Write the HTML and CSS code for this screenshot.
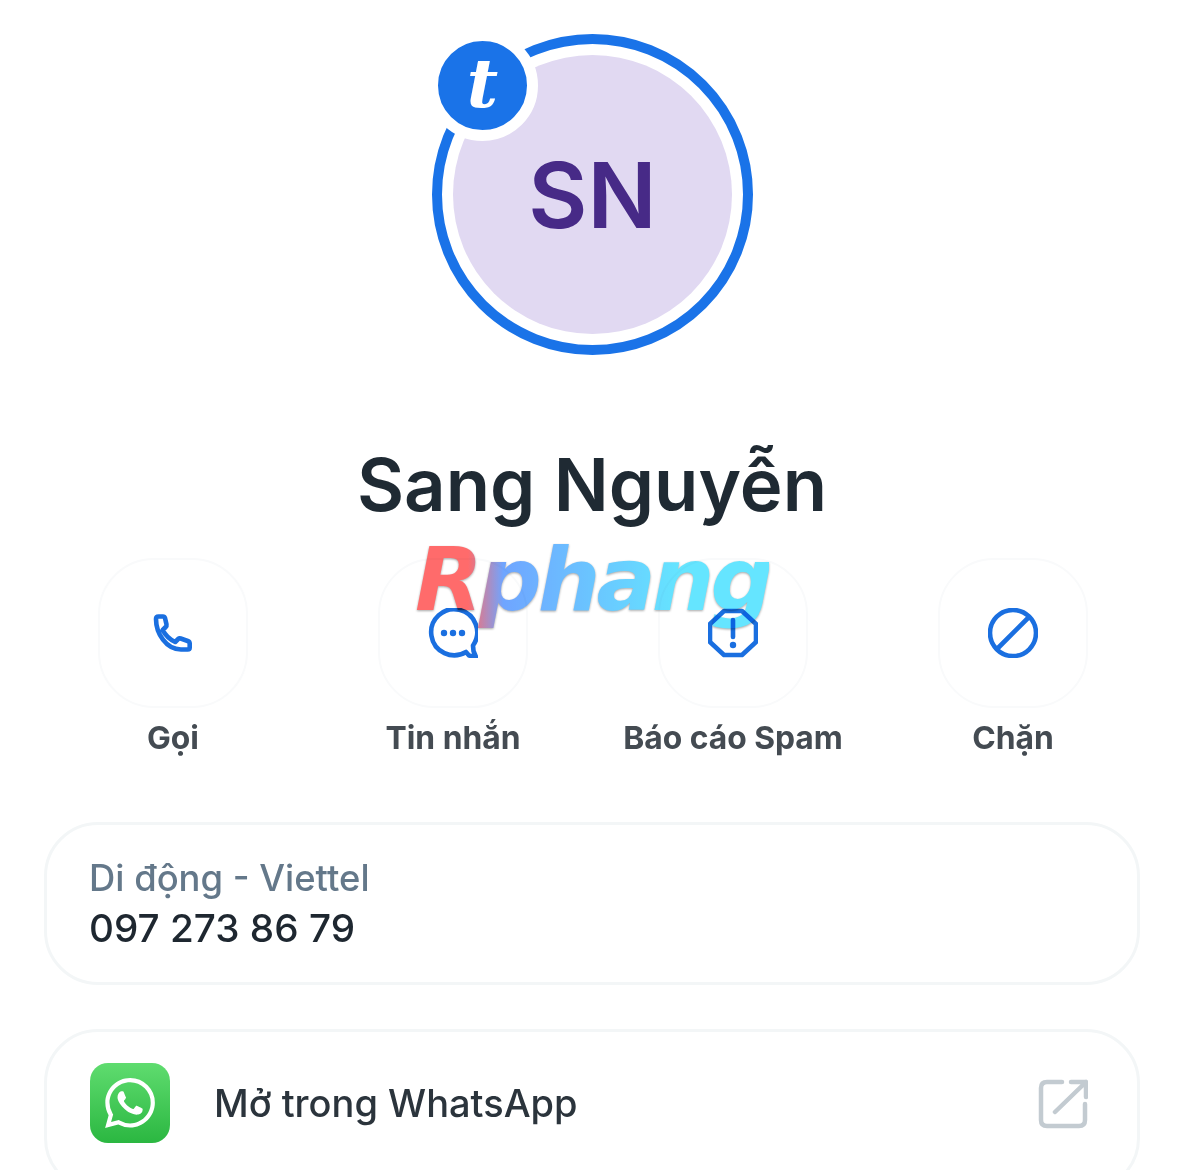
FILE: index.html
```html
<!DOCTYPE html>
<html lang="vi">
<head>
  <meta charset="UTF-8">
  <meta name="viewport" content="width=device-width, initial-scale=1.0">
  <title>Sang Nguyễn</title>
  <link rel="stylesheet" href="styles.css">
</head>
<body>
  <div class="page">
    <div class="avatar">
      <div class="avatar-inner">SN</div>
      <div class="badge">t</div>
    </div>

    <h1 class="name">Sang Nguyễn</h1>

    <div class="actions">
      <div class="action">
        <div class="action-box">
          <svg class="icon" viewBox="0 0 50 50"><path d="M8 11q0-2.500 2.500-2.500h4.500q1.500 0 2 1.500l1.500 6.500q.3 1.500-.8 2.500l-3 3q4 8 12.500 12l3-3q1-1 2.500-.5l7 2.500q2 .8 2 2.500v4q0 2-2 2h-6C18 42 8 25 8 11z"/></svg>
        </div>
        <div class="action-label">Gọi</div>
      </div>
      <div class="action">
        <div class="action-box">
          <svg class="icon" viewBox="0 0 50 50"><path d="M48 49l-7-1.500-3-3.500a23 23 0 1 1 7-6.500l.5 5.500z"/><circle class="dot" cx="16" cy="25" r="3.200"/><circle class="dot" cx="25" cy="25" r="3.200"/><circle class="dot" cx="34" cy="25" r="3.200"/></svg>
        </div>
        <div class="action-label">Tin nhắn</div>
      </div>
      <div class="action">
        <div class="action-box">
          <svg class="icon" viewBox="0 0 50 50"><path d="M16 3h18l14 13v18L34 47H16L2 34V16z"/><path d="M25 12v17"/><circle class="dot" cx="25" cy="37" r="3.200"/></svg>
        </div>
        <div class="action-label">Báo cáo Spam</div>
      </div>
      <div class="action">
        <div class="action-box">
          <svg class="icon" viewBox="0 0 50 50"><circle cx="25" cy="25" r="23"/><path d="M9 41L41 9"/></svg>
        </div>
        <div class="action-label">Chặn</div>
      </div>
    </div>

    <div class="card card-phone">
      <div class="phone-type">Di động - Viettel</div>
      <div class="phone-number">097 273 86 79</div>
    </div>

    <div class="card card-link">
      <div class="wa-icon">
        <svg viewBox="0 0 24 24"><path d="M17.472 14.382c-.297-.149-1.758-.867-2.03-.967-.273-.099-.471-.148-.67.15-.197.297-.767.966-.94 1.164-.173.199-.347.223-.644.075-.297-.15-1.255-.463-2.39-1.475-.883-.788-1.48-1.761-1.653-2.059-.173-.297-.018-.458.13-.606.134-.133.298-.347.446-.52.149-.174.198-.298.298-.497.099-.198.05-.371-.025-.52-.075-.149-.669-1.612-.916-2.207-.242-.579-.487-.5-.669-.51-.173-.008-.371-.01-.57-.01-.198 0-.52.074-.792.372-.272.297-1.04 1.016-1.04 2.479 0 1.462 1.065 2.875 1.213 3.074.149.198 2.096 3.2 5.077 4.487.709.306 1.262.489 1.694.625.712.227 1.36.195 1.871.118.571-.085 1.758-.719 2.006-1.413.248-.694.248-1.289.173-1.413-.074-.124-.272-.198-.57-.347m-5.421 7.403h-.004a9.87 9.87 0 01-5.031-1.378l-.361-.214-3.741.982.998-3.648-.235-.374a9.86 9.86 0 01-1.51-5.26c.001-5.45 4.436-9.884 9.888-9.884 2.64 0 5.122 1.03 6.988 2.898a9.825 9.825 0 012.893 6.994c-.003 5.45-4.437 9.884-9.885 9.884m8.413-18.297A11.815 11.815 0 0012.05 0C5.495 0 .16 5.335.157 11.892c0 2.096.547 4.142 1.588 5.945L.057 24l6.305-1.654a11.882 11.882 0 005.683 1.448h.005c6.554 0 11.89-5.335 11.893-11.893a11.821 11.821 0 00-3.48-8.413z"/></svg>
      </div>
      <div class="link-text">Mở trong WhatsApp</div>
      <svg class="ext-icon" viewBox="0 0 50 50"><path d="M24 3H9q-6 0-6 6v32q0 6 6 6h32q6 0 6-6V25"/><path d="M17 33L48 3M33 3h15v15"/></svg>
    </div>

    <div class="watermark">Rphang</div>
  </div>
</body>
</html>
```

FILE: styles.css
```css
html, body { margin: 0; height: 100%; background: #fff; }
body { font-family: Inter, "Noto Sans", sans-serif; overflow: hidden; }
.page { position: relative; height: 1170px; overflow: hidden; padding-top: 34px; box-sizing: border-box; }

.avatar { position: relative; width: 321px; height: 321px; margin-left: 432px; box-sizing: border-box; border: 10px solid #1a73e8; border-radius: 50%; padding: 11px; }
.avatar-inner { width: 100%; height: 100%; border-radius: 50%; background: #e1d9f2; color: #472a87; font-size: 91px; font-weight: 600; display: flex; align-items: center; justify-content: center; }
.badge { position: absolute; left: -10px; top: -9px; width: 89px; height: 89px; box-sizing: content-box; border: 11px solid #fff; margin: -5px 0 0 -5px; border-radius: 50%; background: #1a73e8; color: #fff; font-family: "DejaVu Serif", serif; font-style: italic; font-weight: 700; font-size: 68px; line-height: 84px; text-align: center; }

.name { margin: 88px 0 0; text-align: center; font-size: 72.500px; line-height: 84px; font-weight: 600; color: #1f2a33; }

.actions { display: grid; grid-template-columns: repeat(4, 280px); margin: 31px 0 0 33px; }
.action { display: flex; flex-direction: column; align-items: center; }
.action-box { width: 150px; height: 150px; box-sizing: border-box; border: 2px solid #f9fafb; border-radius: 56px; display: flex; align-items: center; justify-content: center; }
.icon { width: 50px; height: 50px; fill: none; stroke: #1a6fe0; stroke-width: 4.600; stroke-linejoin: round; stroke-linecap: round; }
.icon .dot { fill: #1a6fe0; stroke: none; }
.action-label { margin-top: 11px; font-size: 31.800px; line-height: 38px; font-weight: 700; color: #444b52; white-space: nowrap; }

.card { margin: 0 44px; box-sizing: border-box; border: 3px solid #f3f6f7; border-radius: 54px; }
.card-phone { height: 163px; margin-top: 65px; padding: 29px 42px 0; }
.phone-type { font-size: 36.400px; line-height: 48px; font-weight: 500; color: #64788a; }
.phone-number { font-size: 38.700px; line-height: 52px; font-weight: 500; color: #1e2730; }

.card-link { height: 163px; margin-top: 44px; padding: 31px 48px 0 43px; display: flex; align-items: flex-start; }
.wa-icon { width: 80px; height: 80px; flex: none; border-radius: 18px; background: linear-gradient(#5fdc6f, #2bb741); display: flex; align-items: center; justify-content: center; }
.wa-icon svg { width: 50px; height: 50px; fill: #fff; }
.link-text { margin-left: 44px; flex: 1; font-size: 38px; line-height: 80px; font-weight: 500; color: #2b343c; }
.ext-icon { width: 50px; height: 50px; margin-top: 16px; margin-right: 1px; fill: none; stroke: #c3cbd1; stroke-width: 4.500; stroke-linecap: round; stroke-linejoin: round; }

/* sits over the action row, icons show through it */
.watermark { position: absolute; left: 415px; top: 527px; font-family: "DejaVu Sans", sans-serif; font-style: italic; font-weight: 700; font-size: 88px; line-height: 106px; letter-spacing: -4px; color: transparent; background: linear-gradient(90deg, #ff6b6b 0, #ff6b6b 15%, #6fa5ff 25%, #65e5ff 75%); -webkit-background-clip: text; background-clip: text; filter: drop-shadow(0 1px 1px rgba(0,0,0,.35)); mix-blend-mode: multiply; }
```
